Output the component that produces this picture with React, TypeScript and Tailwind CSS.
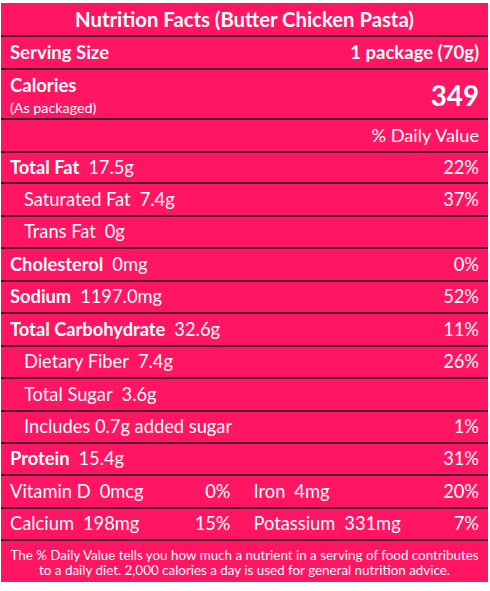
const ROWS: ReadonlyArray<{
  label: string;
  amount?: string;
  pct?: string;
  bold?: boolean;
  indent?: boolean;
  h: string;
}> = [
  { label: "Total Fat", amount: "17.5g", pct: "22%", bold: true, h: "h-[31px]" },
  { label: "Saturated Fat", amount: "7.4g", pct: "37%", indent: true, h: "h-[33px]" },
  { label: "Trans Fat", amount: "0g", indent: true, h: "h-[32px]" },
  { label: "Cholesterol", amount: "0mg", pct: "0%", bold: true, h: "h-[33px]" },
  { label: "Sodium", amount: "1197.0mg", pct: "52%", bold: true, h: "h-[32px]" },
  { label: "Total Carbohydrate", amount: "32.6g", pct: "11%", bold: true, h: "h-[33px]" },
  { label: "Dietary Fiber", amount: "7.4g", pct: "26%", indent: true, h: "h-[32px]" },
  { label: "Total Sugar", amount: "3.6g", indent: true, h: "h-[33px]" },
  { label: "Includes 0.7g added sugar", pct: "1%", indent: true, h: "h-[32px]" },
  { label: "Protein", amount: "15.4g", pct: "31%", bold: true, h: "h-[32px]" },
];

const MINERALS = [
  [
    { label: "Vitamin D", amount: "0mcg", pct: "0%" },
    { label: "Iron", amount: "4mg", pct: "20%" },
  ],
  [
    { label: "Calcium", amount: "198mg", pct: "15%" },
    { label: "Potassium", amount: "331mg", pct: "7%" },
  ],
];

export default function App() {
  return (
    <div className="bg-white w-[490px] h-[591px] pt-[3px] pl-[1px] font-['Lato',sans-serif] text-white">
      <div className="w-[487px] bg-[#ff1562] flex flex-col">
        <div className="h-[34px] flex items-center justify-center border-b-2 border-[#4a1230] text-[20.3px] font-bold">
          Nutrition Facts (Butter Chicken Pasta)
        </div>
        <div className="h-[33px] flex items-center justify-between px-[9px] border-b-2 border-[#4a1230] text-[18.5px] font-bold">
          <span>Serving Size</span>
          <span>1 package (70g)</span>
        </div>
        <div className="h-[50px] flex items-center justify-between px-[9px] border-b-2 border-[#4a1230]">
          <div className="flex flex-col leading-none mt-[3px]">
            <span className="text-[18.5px] font-bold">Calories</span>
            <span className="text-[14.3px] mt-[6px]">(As packaged)</span>
          </div>
          <span className="text-[27.7px] font-bold leading-none mt-[3px]">349</span>
        </div>
        <div className="h-[33px] flex items-center justify-end px-[9px] border-b-2 border-[#4a1230] text-[18.2px]">
          % Daily Value
        </div>
        {ROWS.map((r) => (
          <div
            key={r.label}
            className={`${r.h} flex items-center justify-between pr-[9px] border-b-2 border-[#4a1230] text-[18.3px] ${
              r.indent ? "pl-[23px]" : "pl-[9px]"
            }`}
          >
            <span>
              <span className={r.bold ? "font-bold" : ""}>{r.label}</span>
              {r.amount ? <span className="ml-[9px]">{r.amount}</span> : null}
            </span>
            {r.pct ? <span>{r.pct}</span> : null}
          </div>
        ))}
        {MINERALS.map((pair, i) => (
          <div
            key={i}
            className={`${i === 0 ? "h-[33px]" : "h-[32px]"} grid grid-cols-2 border-b-2 border-[#4a1230] text-[18.3px]`}
          >
            <div className="flex items-center justify-between pl-[9px] pr-[14px]">
              <span>
                {pair[0].label}
                <span className="ml-[9px]">{pair[0].amount}</span>
              </span>
              <span>{pair[0].pct}</span>
            </div>
            <div className="flex items-center justify-between pl-[9px] pr-[9px]">
              <span>
                {pair[1].label}
                <span className="ml-[9px]">{pair[1].amount}</span>
              </span>
              <span>{pair[1].pct}</span>
            </div>
          </div>
        ))}
        <p className="h-[41px] pt-[2px] flex items-center justify-center text-center text-[13.4px] leading-[15px]">
          The % Daily Value tells you how much a nutrient in a serving of food contributes
          <br />
          to a daily diet. 2,000 calories a day is used for general nutrition advice.
        </p>
      </div>
    </div>
  );
}
